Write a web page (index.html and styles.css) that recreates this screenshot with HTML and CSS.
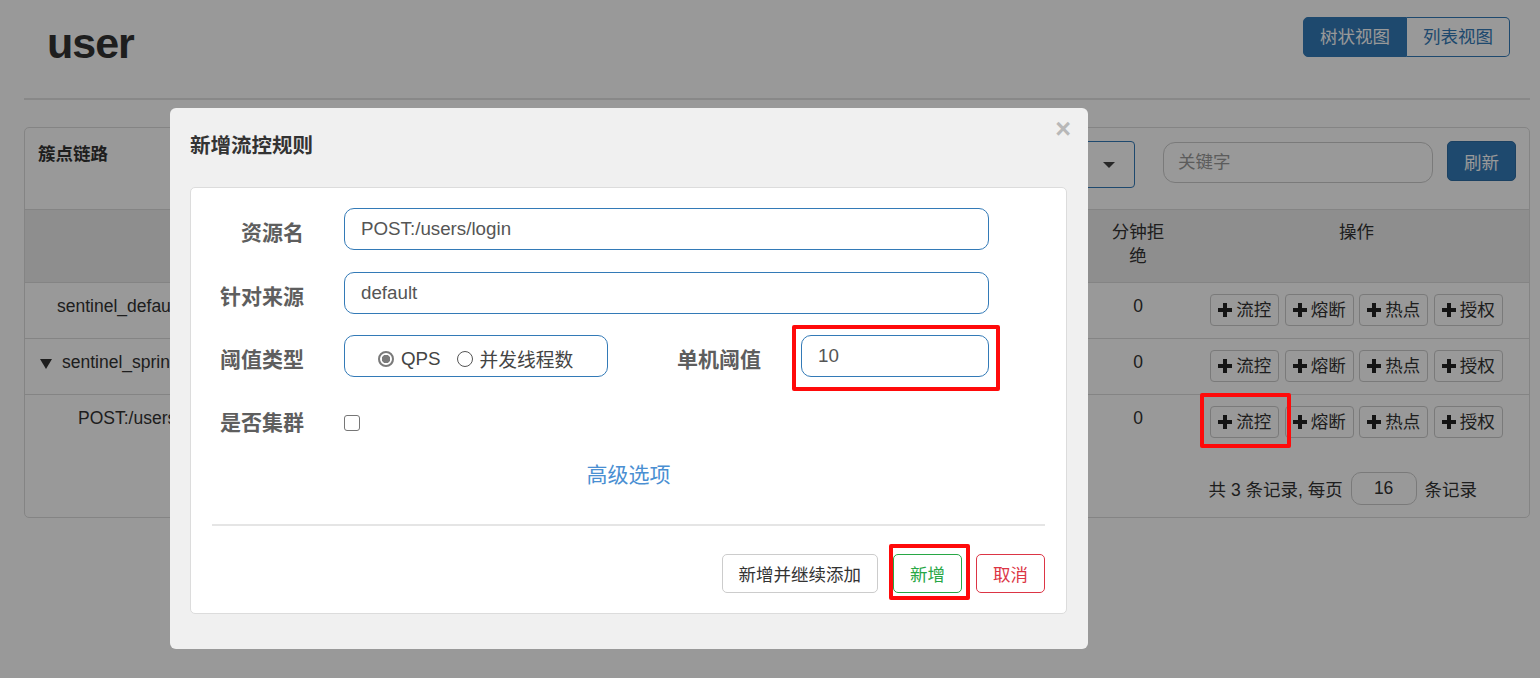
FILE: index.html
```html
<!DOCTYPE html>
<html lang="zh-CN">
<head>
<meta charset="utf-8">
<title>新增流控规则</title>
<link rel="stylesheet" href="styles.css">
</head>
<body>
<div class="page">
  <header class="page-header">
    <h1 class="app-title">user</h1>
    <div class="view-switch">
      <button class="view-btn active">树状视图</button>
      <button class="view-btn">列表视图</button>
    </div>
  </header>

  <section class="panel">
    <div class="panel-head">
      <div class="panel-title">簇点链路</div>
      <div class="panel-tools">
        <div class="machine-select"><span class="caret"></span></div>
        <input class="keyword" type="text" placeholder="关键字">
        <button class="refresh-btn">刷新</button>
      </div>
    </div>
    <table class="res-table">
      <colgroup>
        <col class="c-name"><col class="c-num"><col class="c-num"><col class="c-num"><col class="c-num"><col class="c-num"><col class="c-rej"><col class="c-op">
      </colgroup>
      <thead>
        <tr><th>资源名</th><th>通过QPS</th><th>拒绝QPS</th><th>并发数</th><th>平均RT</th><th>分钟通过</th><th class="rej">分钟拒绝</th><th>操作</th></tr>
      </thead>
      <tbody>
        <tr>
          <td class="name lvl1">sentinel_default_context</td><td>0</td><td>0</td><td>0</td><td>0</td><td>0</td><td class="rej">0</td>
          <td class="ops"><span class="op-btn"><svg class="plus" viewBox="0 0 14 14"><path d="M5 0h4v5h5v4H9v5H5V9H0V5h5z"/></svg>流控</span><span class="op-btn"><svg class="plus" viewBox="0 0 14 14"><path d="M5 0h4v5h5v4H9v5H5V9H0V5h5z"/></svg>熔断</span><span class="op-btn"><svg class="plus" viewBox="0 0 14 14"><path d="M5 0h4v5h5v4H9v5H5V9H0V5h5z"/></svg>热点</span><span class="op-btn"><svg class="plus" viewBox="0 0 14 14"><path d="M5 0h4v5h5v4H9v5H5V9H0V5h5z"/></svg>授权</span></td>
        </tr>
        <tr>
          <td class="name lvl0"><span class="tri"></span>sentinel_spring_web_context</td><td>0</td><td>0</td><td>0</td><td>0</td><td>0</td><td class="rej">0</td>
          <td class="ops"><span class="op-btn"><svg class="plus" viewBox="0 0 14 14"><path d="M5 0h4v5h5v4H9v5H5V9H0V5h5z"/></svg>流控</span><span class="op-btn"><svg class="plus" viewBox="0 0 14 14"><path d="M5 0h4v5h5v4H9v5H5V9H0V5h5z"/></svg>熔断</span><span class="op-btn"><svg class="plus" viewBox="0 0 14 14"><path d="M5 0h4v5h5v4H9v5H5V9H0V5h5z"/></svg>热点</span><span class="op-btn"><svg class="plus" viewBox="0 0 14 14"><path d="M5 0h4v5h5v4H9v5H5V9H0V5h5z"/></svg>授权</span></td>
        </tr>
        <tr>
          <td class="name lvl2">POST:/users/login</td><td>0</td><td>0</td><td>0</td><td>0</td><td>0</td><td class="rej">0</td>
          <td class="ops"><span class="op-btn"><svg class="plus" viewBox="0 0 14 14"><path d="M5 0h4v5h5v4H9v5H5V9H0V5h5z"/></svg>流控</span><span class="op-btn"><svg class="plus" viewBox="0 0 14 14"><path d="M5 0h4v5h5v4H9v5H5V9H0V5h5z"/></svg>熔断</span><span class="op-btn"><svg class="plus" viewBox="0 0 14 14"><path d="M5 0h4v5h5v4H9v5H5V9H0V5h5z"/></svg>热点</span><span class="op-btn"><svg class="plus" viewBox="0 0 14 14"><path d="M5 0h4v5h5v4H9v5H5V9H0V5h5z"/></svg>授权</span></td>
        </tr>
      </tbody>
    </table>
    <div class="pager">共 3 条记录, 每页 <span class="page-size">16</span> 条记录</div>
  </section>
</div>

<div class="backdrop"></div>

<div class="modal">
  <div class="modal-head">
    <div class="modal-title">新增流控规则</div>
    <div class="modal-close">×</div>
  </div>
  <div class="modal-card">
    <div class="form-row">
      <label class="f-label">资源名</label>
      <div class="f-input wide">POST:/users/login</div>
    </div>
    <div class="form-row">
      <label class="f-label">针对来源</label>
      <div class="f-input wide">default</div>
    </div>
    <div class="form-row">
      <label class="f-label">阈值类型</label>
      <div class="radio-box">
        <span class="radio-item"><input type="radio" name="grade" checked>QPS</span>
        <span class="radio-item"><input type="radio" name="grade">并发线程数</span>
      </div>
      <label class="f-label second">单机阈值</label>
      <div class="f-input small">10</div>
    </div>
    <div class="form-row">
      <label class="f-label">是否集群</label>
      <input class="cluster-check" type="checkbox">
    </div>
    <div class="adv-link">高级选项</div>
    <div class="divider"></div>
    <div class="modal-actions">
      <button class="act-btn plain">新增并继续添加</button>
      <button class="act-btn ok">新增</button>
      <button class="act-btn cancel">取消</button>
    </div>
  </div>
</div>

<div class="mark mark-threshold"></div>
<div class="mark mark-flow"></div>
<div class="mark mark-add"></div>
</body>
</html>
```

FILE: styles.css
```css
* { box-sizing: border-box; }
html, body { margin: 0; padding: 0; }
body {
  position: relative;
  width: 1540px;
  height: 678px;
  overflow: hidden;
  background: #fff;
  font-family: "Liberation Sans", "Noto Sans CJK SC", sans-serif;
  font-size: 17.5px;
  color: #333;
}
button { font-family: inherit; }

.page { padding: 0 10px 0 24px; }

.page-header {
  display: flex;
  justify-content: space-between;
  align-items: flex-start;
  height: 100px;
  border-bottom: 2px solid #e3e3e3;
}
.app-title {
  margin: 19px 0 0 23px;
  font-size: 43px;
  line-height: 48px;
  font-weight: bold;
  color: #333;
  letter-spacing: -1px;
}
.view-switch { display: flex; margin: 17px 20px 0 0; }
.view-btn {
  height: 40px;
  padding: 0 16px;
  font-size: 17.5px;
  border: 1px solid #337ab7;
  background: #fff;
  color: #337ab7;
  line-height: 38px;
}
.view-btn:first-child { border-radius: 5px 0 0 5px; }
.view-btn:last-child { border-radius: 0 5px 5px 0; border-left: none; width: 103px; }
.view-btn.active { background: #337ab7; color: #fff; width: 104px; }

.panel {
  margin-top: 27px;
  border: 1px solid #ddd;
  border-radius: 5px;
}
.panel-head {
  display: flex;
  justify-content: space-between;
  align-items: flex-start;
  height: 81px;
  padding: 13px 13px 0 13px;
}
.panel-title {
  font-size: 17.5px;
  font-weight: bold;
  line-height: 26px;
  color: #333;
}
.panel-tools { display: flex; align-items: flex-start; }
.machine-select {
  width: 320px;
  height: 47px;
  border: 1px solid #337ab7;
  border-radius: 4px;
  margin-right: 28px;
  display: flex;
  justify-content: flex-end;
  align-items: center;
  padding-right: 19px;
}
.caret {
  width: 0; height: 0;
  border-left: 6px solid transparent;
  border-right: 6px solid transparent;
  border-top: 6px solid #444;
}
.keyword {
  margin-top: 1px;
  width: 270px;
  height: 41px;
  border: 1px solid #ccc;
  border-radius: 12px;
  padding: 0 14px;
  font-family: inherit;
  font-size: 17.5px;
  color: #555;
  margin-right: 14px;
  outline: none;
}
.keyword::placeholder { color: #999; }
.refresh-btn {
  width: 69px;
  height: 40px;
  border: 1px solid #2e6da4;
  border-radius: 5px;
  background: #337ab7;
  color: #fff;
  font-size: 17.5px;
}

.res-table {
  width: 100%;
  table-layout: fixed;
  border-collapse: collapse;
  border-top: 1px solid #ddd;
}
.c-name { width: 405px; }
.c-num { width: 134px; }
.c-rej { width: 84px; }
.c-op { width: 345px; }
.res-table th {
  background: #ededed;
  font-weight: normal;
  text-align: center;
  vertical-align: top;
  padding: 10px 12px 14px;
  line-height: 24px;
  height: 72px;
  color: #333;
}
.res-table td {
  border-top: 1px solid #ddd;
  text-align: center;
  vertical-align: top;
  padding: 11px 8px 12px;
  line-height: 24px;
  color: #333;
  white-space: nowrap;
  overflow: hidden;
}
.res-table th.rej { padding-left: 8px; padding-right: 16px; }
.res-table td.rej { padding-right: 8px; padding-left: 0; }
.res-table td.name { text-align: left; }
.lvl0 { padding-left: 15px !important; }
.lvl1 { padding-left: 32px !important; }
.lvl2 { padding-left: 53px !important; }
.tri {
  display: inline-block;
  width: 0; height: 0;
  border-left: 6px solid transparent;
  border-right: 6px solid transparent;
  border-top: 10px solid #333;
  margin-right: 10px;
  vertical-align: -1px;
}
.res-table td.ops { padding: 11px 0 12px 0; }
.op-btn {
  display: inline-flex;
  align-items: center;
  height: 32px;
  padding: 0 7px 0 7px;
  margin: 0 2.75px;
  border: 1px solid #ccc;
  border-radius: 4px;
  font-size: 17.5px;
  vertical-align: top;
}
.plus { width: 14px; height: 14px; fill: #222; margin-right: 4px; }

.pager {
  display: flex;
  justify-content: flex-end;
  align-items: center;
  padding: 22px 52px 12px 0;
  color: #333;
  font-size: 17.5px;
  white-space: pre;
}
.page-size {
  display: inline-flex;
  justify-content: center;
  align-items: center;
  width: 66px;
  height: 33px;
  border: 1px solid #ccc;
  border-radius: 10px;
  margin: 0 3px;
}

.backdrop {
  position: fixed;
  inset: 0;
  background: rgba(0, 0, 0, 0.4);
}

.modal {
  position: absolute;
  left: 170px;
  top: 108px;
  width: 918px;
  background: #f0f0f0;
  border-radius: 6px;
  padding: 0 21px 35px 20px;
}
.modal-head {
  display: flex;
  justify-content: space-between;
  align-items: flex-start;
  height: 79px;
  padding-top: 7px;
}
.modal-title {
  margin-top: 17px;
  font-size: 20.5px;
  line-height: 28px;
  font-weight: bold;
  color: #333;
}
.modal-close {
  margin-right: -4px;
  font-size: 27px;
  line-height: 28px;
  font-weight: bold;
  color: #b8b8b8;
}
.modal-card {
  background: #fff;
  border: 1px solid #dcdcdc;
  border-radius: 5px;
  padding: 20px 21px 20px 21px;
}
.form-row {
  display: flex;
  align-items: flex-start;
  height: 42px;
  margin-bottom: 21px;
}
.form-row:first-child { margin-bottom: 22px; }
.f-label {
  width: 92px;
  margin-right: 40px;
  padding-top: 11px;
  text-align: right;
  font-size: 21px;
  line-height: 28px;
  font-weight: bold;
  color: #5e5e5e;
}
.f-label.second { width: 153px; }
.f-input {
  height: 42px;
  border: 1px solid #337ab7;
  border-radius: 10px;
  padding: 0 16px;
  font-size: 18.75px;
  line-height: 40px;
  color: #555;
}
.f-input.wide { width: 645px; }
.f-input.small { width: 188px; }
.radio-box {
  display: flex;
  align-items: center;
  width: 264px;
  height: 42px;
  border: 1px solid #337ab7;
  border-radius: 10px;
  padding: 5px 0 0 33px;
  font-size: 18.75px;
  color: #444;
}
.radio-item { display: inline-flex; align-items: center; }
.radio-item + .radio-item { margin-left: 16px; }
.radio-box input {
  appearance: none;
  -webkit-appearance: none;
  margin: 0 7px 0 0;
  width: 16px;
  height: 16px;
  border: 1.5px solid #555;
  border-radius: 50%;
  background: #fff;
}
.radio-box input:checked {
  border: 2px solid #7a7a7a;
  background: radial-gradient(circle, #7a7a7a 0 4px, #fff 4.5px);
}
.cluster-check {
  appearance: none;
  -webkit-appearance: none;
  margin: 17px 0 0 0;
  width: 16px;
  height: 16px;
  border: 1.5px solid #767676;
  border-radius: 3px;
  background: #fff;
}
.adv-link {
  margin-top: 20px;
  text-align: center;
  font-size: 21px;
  line-height: 28px;
  color: #4a8fd2;
}
.divider {
  margin-top: 35px;
  height: 2px;
  background: #e5e5e5;
}
.modal-actions {
  display: flex;
  justify-content: flex-end;
  margin-top: 28px;
}
.act-btn {
  height: 39px;
  padding: 0 16px;
  border-radius: 5px;
  font-size: 17.5px;
  background: #fff;
  white-space: nowrap;
}
.act-btn.plain { border: 1px solid #ccc; color: #333; }
.act-btn.ok { border: 1px solid #28a745; color: #28a745; margin-left: 15px; }
.act-btn.cancel { border: 1px solid #dc3545; color: #dc3545; margin-left: 14px; }

.mark {
  position: absolute;
  border: 4px solid #ff0a0a;
  border-radius: 2px;
}
.mark-threshold { left: 792px; top: 325px; width: 208px; height: 66px; }
.mark-flow { left: 1200px; top: 393px; width: 91px; height: 55px; }
.mark-add { left: 889px; top: 544px; width: 81px; height: 56px; }
```
